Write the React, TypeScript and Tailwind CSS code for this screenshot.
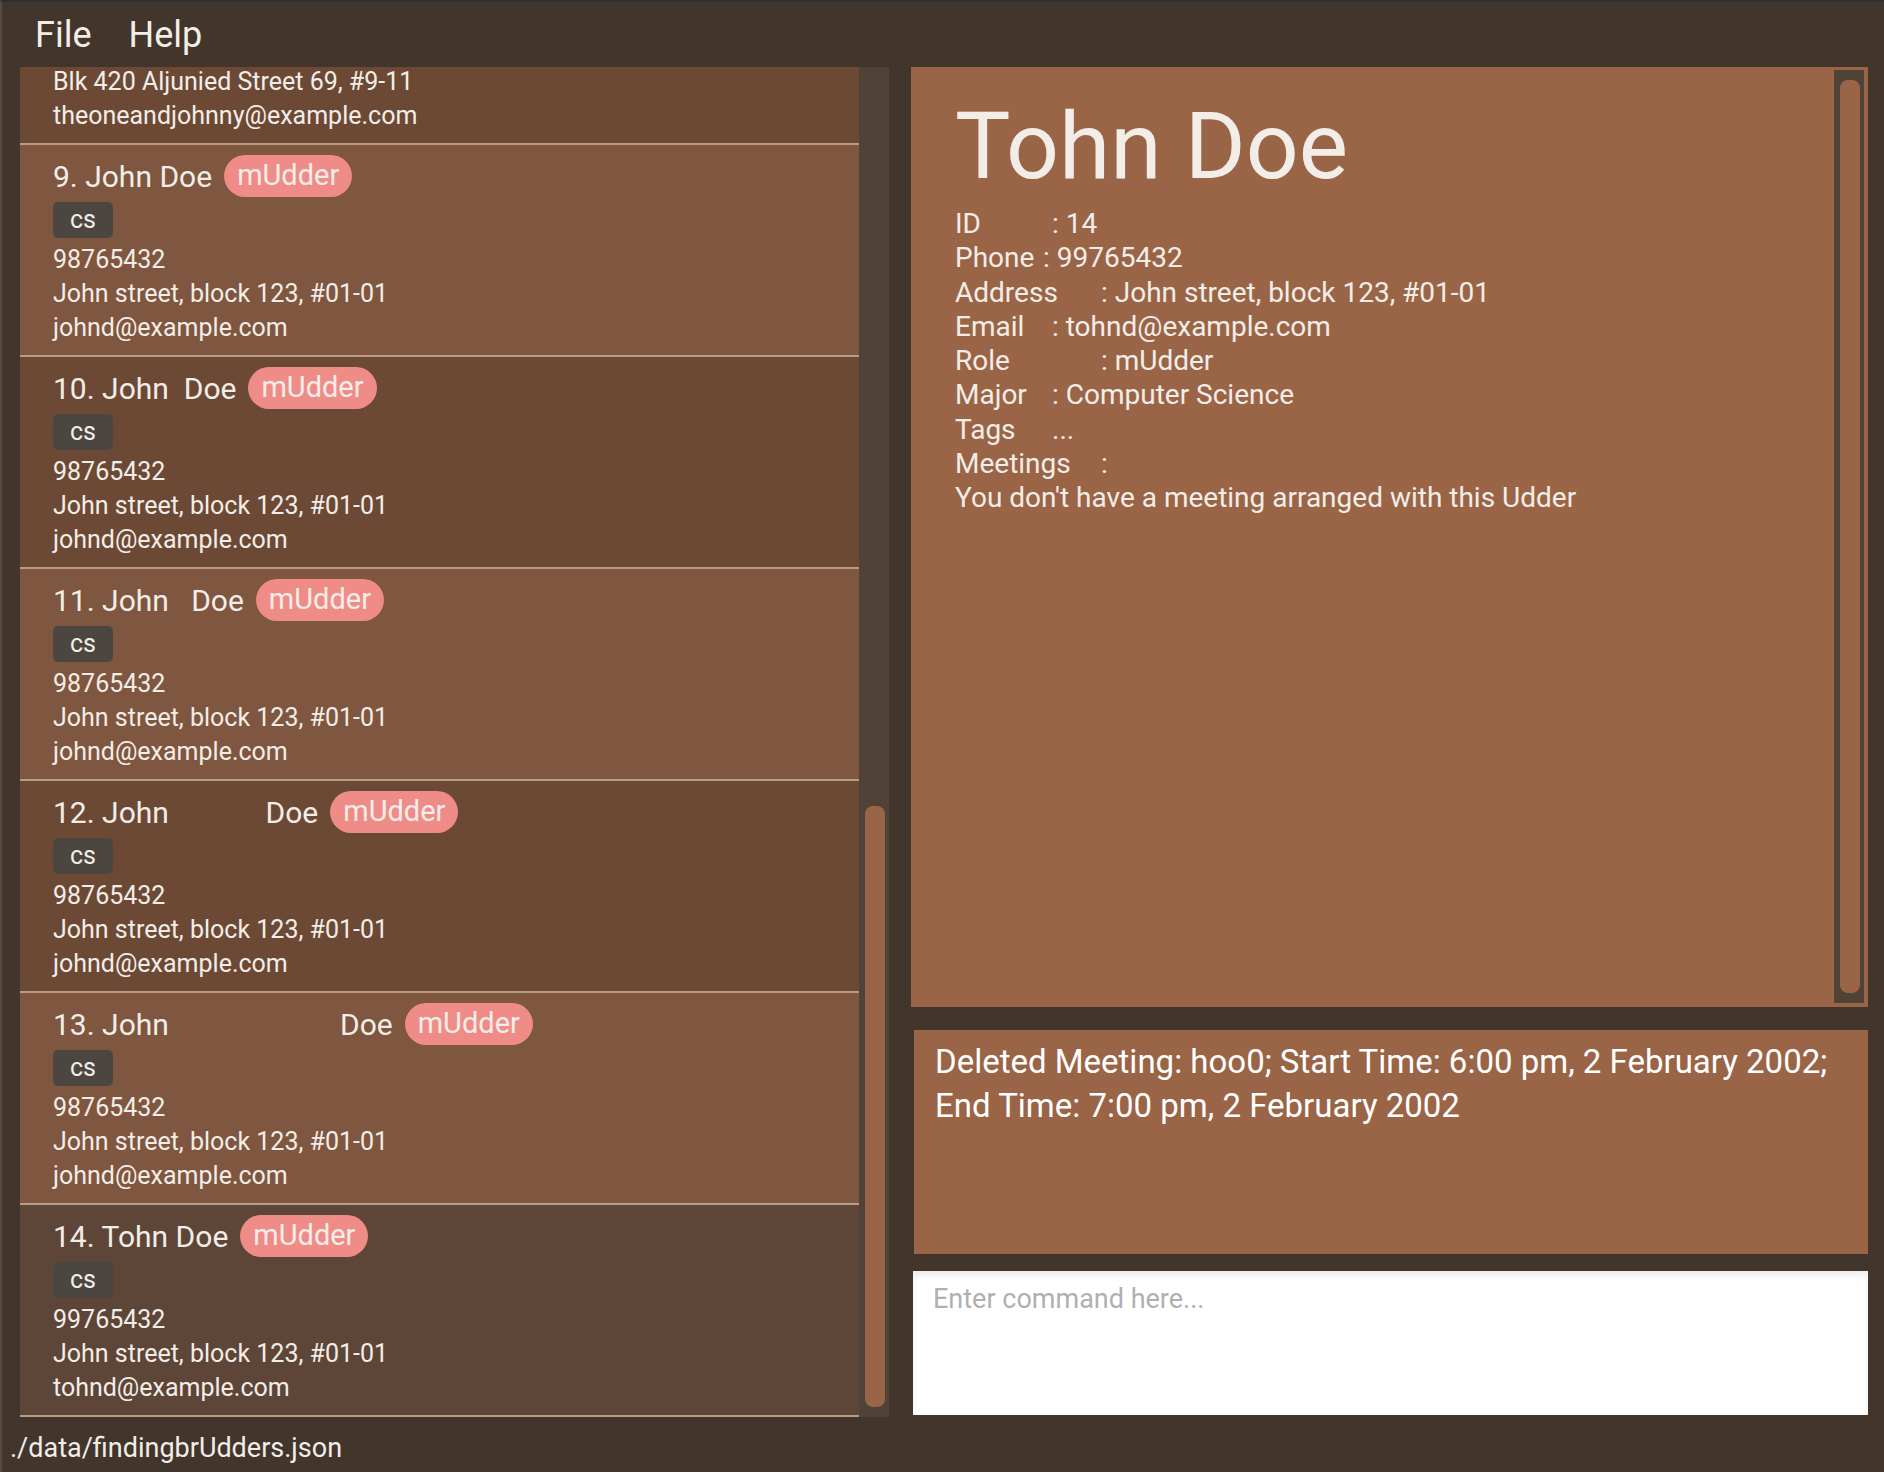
import React from 'react';

interface Person {
  id: number;
  name: string;
  phone: string;
  address: string;
  email: string;
}

const people: Person[] = [
  { id: 9, name: 'John Doe', phone: '98765432', address: 'John street, block 123, #01-01', email: 'johnd@example.com' },
  { id: 10, name: 'John  Doe', phone: '98765432', address: 'John street, block 123, #01-01', email: 'johnd@example.com' },
  { id: 11, name: 'John   Doe', phone: '98765432', address: 'John street, block 123, #01-01', email: 'johnd@example.com' },
  { id: 12, name: 'John             Doe', phone: '98765432', address: 'John street, block 123, #01-01', email: 'johnd@example.com' },
  { id: 13, name: 'John                       Doe', phone: '98765432', address: 'John street, block 123, #01-01', email: 'johnd@example.com' },
  { id: 14, name: 'Tohn Doe', phone: '99765432', address: 'John street, block 123, #01-01', email: 'tohnd@example.com' },
];

const PersonCard = ({ person, selected }: { person: Person; selected: boolean }) => {
  const bg = selected ? 'bg-[#5d4537]' : person.id % 2 === 0 ? 'bg-[#6c4935]' : 'bg-[#7f563f]';
  return (
    <div className={`${bg} border-b-2 border-[#b89d82] pt-[10px] pb-[10px] pl-[33px] shrink-0`}>
      <div className="flex items-center gap-[12px] h-[42px]">
        <span className="text-[30px] whitespace-pre">{`${person.id}. ${person.name}`}</span>
        <span className="rounded-full bg-[#f08c88] px-[13px] h-[42px] flex items-center text-[29px]">mUdder</span>
      </div>
      <div className="mt-[5px] flex">
        <span className="bg-[#4c4640] rounded-[5px] h-[36px] px-[17px] flex items-center text-[25px]">cs</span>
      </div>
      <div className="mt-[5px] text-[25px] leading-[34px]">
        <div>{person.phone}</div>
        <div>{person.address}</div>
        <div>{person.email}</div>
      </div>
    </div>
  );
};

const DetailRow = ({ label, width, value, colon = true }: { label: string; width: string; value: string; colon?: boolean }) => (
  <div className="flex whitespace-pre">
    <span className={width}>{label}</span>
    <span>{colon ? `: ${value}` : value}</span>
  </div>
);

export default function App() {
  return (
    <div
      className="w-[1884px] h-[1472px] bg-[#42352c] flex flex-col border-t-2 border-t-[#303030] border-l-2 border-l-[#554b44] text-[#f3ede8] overflow-hidden"
      style={{ fontFamily: 'Roboto, sans-serif' }}
    >
      {/* Menu bar */}
      <div className="h-[65px] shrink-0 flex items-center pl-[33px] gap-[37px] text-[36px]">
        <span>File</span>
        <span>Help</span>
      </div>

      {/* Main */}
      <div className="flex h-[1351px] shrink-0 pl-[18px]">
        {/* Person list */}
        <div className="flex w-[869px]">
          <div className="w-[839px] flex flex-col overflow-hidden">
            {/* card 8, scrolled mostly out of view */}
            <div className="h-[78px] shrink-0 bg-[#6c4935] border-b-2 border-[#b89d82] pl-[33px] pb-[10px] flex flex-col justify-end overflow-hidden text-[25px] leading-[34px]">
              <div>Blk 420 Aljunied Street 69, #9-11</div>
              <div>theoneandjohnny@example.com</div>
            </div>
            {people.map(p => (
              <PersonCard key={p.id} person={p} selected={p.id === 14} />
            ))}
          </div>
          <div className="w-[30px] bg-[#514238] flex flex-col justify-end pb-[10px] pl-[6px] pr-[4px] h-[1350px]">
            <div className="h-[601px] rounded-[8px] bg-[#9a6547]" />
          </div>
        </div>

        {/* Right column */}
        <div className="ml-[22px] w-[957px] flex flex-col">
          <div className="h-[940px] bg-[#9a6547] flex">
            <div className="flex-1 pl-[44px] pt-[33px]">
              <div className="text-[93px] leading-[93px]">Tohn Doe</div>
              <div className="mt-[14px] text-[28px] leading-[34.3px]">
                <DetailRow label="ID" width="w-[97px]" value="14" />
                <DetailRow label="Phone" width="w-[88px]" value="99765432" />
                <DetailRow label="Address" width="w-[146px]" value="John street, block 123, #01-01" />
                <DetailRow label="Email" width="w-[97px]" value="tohnd@example.com" />
                <DetailRow label="Role" width="w-[146px]" value="mUdder" />
                <DetailRow label="Major" width="w-[97px]" value="Computer Science" />
                <DetailRow label="Tags" width="w-[97px]" value="..." colon={false} />
                <DetailRow label="Meetings" width="w-[146px]" value="" />
                <div>You don't have a meeting arranged with this Udder</div>
              </div>
            </div>
            <div className="w-[30px] mt-[3px] mb-[4px] mr-[4px] bg-[#514238] pt-[10px] pb-[10px] pl-[6px] pr-[4px] flex">
              <div className="flex-1 rounded-[8px] bg-[#9a6547]" />
            </div>
          </div>

          <div className="mt-[23px] ml-[3px] h-[224px] bg-[#9a6547] px-[21px] pt-[10px] text-[33px] leading-[44px] text-white">
            Deleted Meeting: hoo0; Start Time: 6:00 pm, 2 February 2002; End Time: 7:00 pm, 2 February 2002
          </div>

          <div className="mt-[17px] ml-[2px] h-[144px] bg-white shadow-[inset_0_5px_6px_rgba(0,0,0,0.07)] pl-[20px] pt-[8px] text-[27px] text-[#b0b0b0]">
            Enter command here...
          </div>
        </div>
      </div>

      {/* Status bar */}
      <div className="flex-1 flex items-center pl-[8px] pt-[6px] text-[27px]">./data/findingbrUdders.json</div>
    </div>
  );
}
